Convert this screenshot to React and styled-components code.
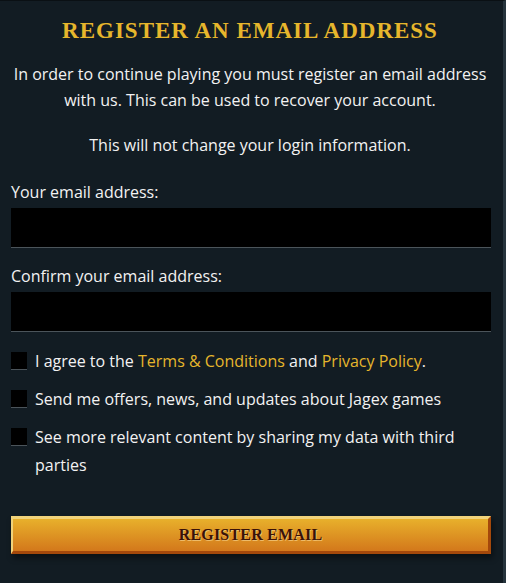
import React from "react";
import styled, { createGlobalStyle } from "styled-components";

const Global = createGlobalStyle`
  html, body { margin: 0; padding: 0; background: #121c23; }
  body { width: 506px; height: 583px; overflow: hidden; }
  * { box-sizing: border-box; }
`;

const Panel = styled.div`
  width: 506px;
  height: 583px;
  background: #121c23;
  border-top: 1px solid #0a1014;
  border-right: 3px solid #26343d;
  padding: 14px 14px 0 11px;
  font-family: "Open Sans", "Noto Sans", sans-serif;
  color: #f2f2f2;
  display: flex;
  flex-direction: column;
`;

const Title = styled.h1`
  margin: 0;
  text-align: center;
  font-family: "Liberation Serif", serif;
  font-weight: bold;
  font-size: 23px;
  letter-spacing: 1px;
  color: #e6b62c;
  line-height: 32px;
`;

const Para = styled.p`
  margin: ${(p) => p.$mt || 0}px 0 0;
  text-align: center;
  font-size: 16px;
  line-height: 26px;
`;

const Field = styled.div`
  display: flex;
  flex-direction: column;
  margin-top: ${(p) => p.$mt}px;
`;

const Label = styled.label`
  font-size: 16px;
  line-height: 20px;
  margin-bottom: 6px;
`;

const Input = styled.input`
  height: 40px;
  width: 480px;
  background: #000;
  border: none;
  border-bottom: 1px solid #4b545a;
  outline: none;
  color: #fff;
  font-size: 16px;
  padding: 0 10px;
`;

const Checks = styled.div`
  display: flex;
  flex-direction: column;
  margin-top: 15px;
  gap: 10px;
`;

const CheckRow = styled.label`
  display: flex;
  align-items: flex-start;
  gap: 8px;
  font-size: 16px;
  line-height: 28px;
`;

const Box = styled.span`
  flex: none;
  width: 16px;
  height: 17px;
  margin-top: 5px;
  background: #000;
  box-shadow: 0 1px 0 #4b545a;
`;

const Link = styled.span`
  color: #e6b62c;
`;

const Button = styled.button`
  margin-top: 37px;
  width: 480px;
  height: 38px;
  border: none;
  border-top: 3px solid #f1d37a;
  border-left: 2px solid #f1d37a;
  border-right: 3px solid #a4480b;
  border-bottom: 3px solid #a4480b;
  background: linear-gradient(#e8b02b, #d3781b);
  box-shadow: 2px 4px 6px rgba(0, 0, 0, 0.45);
  font-family: "Liberation Serif", serif;
  font-size: 16px;
  font-weight: bold;
  color: #3a1208;
  text-shadow: 1px 1px 0 rgba(255, 230, 170, 0.55);
  letter-spacing: 0.2px;
  padding: 0;
`;

export default function App() {
  return (
    <>
      <Global />
      <Panel>
        <Title>REGISTER AN EMAIL ADDRESS</Title>
        <Para $mt={14}>
          In order to continue playing you must register an email address with us. This can be used to recover your account.
        </Para>
        <Para $mt={19}>This will not change your login information.</Para>
        <Field $mt={24}>
          <Label>Your email address:</Label>
          <Input type="email" />
        </Field>
        <Field $mt={18}>
          <Label>Confirm your email address:</Label>
          <Input type="email" />
        </Field>
        <Checks>
          <CheckRow>
            <Box />
            <span>
              I agree to the <Link>Terms &amp; Conditions</Link> and <Link>Privacy Policy</Link>.
            </span>
          </CheckRow>
          <CheckRow>
            <Box />
            <span>Send me offers, news, and updates about Jagex games</span>
          </CheckRow>
          <CheckRow>
            <Box />
            <span>See more relevant content by sharing my data with third parties</span>
          </CheckRow>
        </Checks>
        <Button>REGISTER EMAIL</Button>
      </Panel>
    </>
  );
}
